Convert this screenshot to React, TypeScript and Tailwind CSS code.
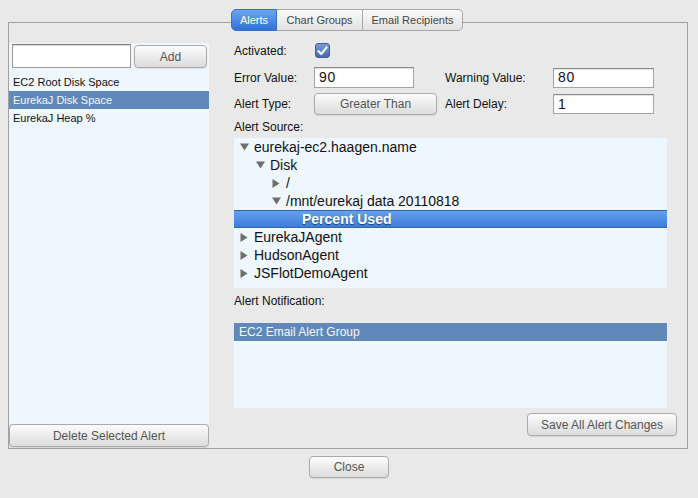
import React from "react";

const alerts = [
  { id: 1, name: "EC2 Root Disk Space", selected: false },
  { id: 2, name: "EurekaJ Disk Space", selected: true },
  { id: 3, name: "EurekaJ Heap %", selected: false },
];

const tree = [
  { label: "eurekaj-ec2.haagen.name", level: 0, arrow: "down" },
  { label: "Disk", level: 1, arrow: "down" },
  { label: "/", level: 2, arrow: "right" },
  { label: "/mnt/eurekaj data 20110818", level: 2, arrow: "down" },
  { label: "Percent Used", level: 3, arrow: "", selected: true },
  { label: "EurekaJAgent", level: 0, arrow: "right" },
  { label: "HudsonAgent", level: 0, arrow: "right" },
  { label: "JSFlotDemoAgent", level: 0, arrow: "right" },
];

const Btn = ({
  children,
  className = "",
}: {
  children: React.ReactNode;
  className?: string;
}) => (
  <button
    className={`flex items-center justify-center rounded-[4px] border border-[#aaaaaa] bg-linear-to-b from-[#fcfcfc] to-[#dcdcdc] text-[12px] text-[#555555] shadow-[0_1px_1px_rgba(0,0,0,0.08)] ${className}`}
  >
    {children}
  </button>
);

const Field = ({ value, className = "" }: { value: string; className?: string }) => (
  <div
    className={`flex items-center border border-[#a4a4a4] border-t-[#8a8a8a] bg-white pl-[4px] text-[14px] tracking-[0.6px] text-[#111] shadow-[inset_0_1px_1px_rgba(0,0,0,0.12)] ${className}`}
  >
    {value}
  </div>
);

const Arrow = ({ dir }: { dir: string }) => (
  <span className="flex w-[14px] items-center">
    {dir === "down" && (
      <svg width="9" height="8" viewBox="0 0 9 8">
        <path d="M0 0.5 H9 L4.5 7.5 Z" fill="#6e6e6e" />
      </svg>
    )}
    {dir === "right" && (
      <svg width="8" height="9" viewBox="0 0 8 9">
        <path d="M0.5 0 V9 L7.5 4.5 Z" fill="#6e6e6e" />
      </svg>
    )}
  </span>
);

const App = () => {
  return (
    <div className="h-[498px] w-[698px] overflow-hidden bg-[#e9e9e9] pt-[9px] font-[family-name:'Liberation_Sans',Arial,sans-serif] text-[#111]">
      {/* Tabs */}
      <div className="relative z-10 flex h-[22px] justify-center pr-[4px] text-[11px]">
        <div className="flex w-[46px] items-center justify-center rounded-l-[5px] border border-[#3a6fc2] bg-linear-to-b from-[#6aa6ee] to-[#2f72d6] text-white">
          Alerts
        </div>
        <div className="flex w-[86px] items-center justify-center border-y border-r border-[#a6a6a6] bg-linear-to-b from-[#fafafa] to-[#e2e2e2] text-[#444]">
          Chart Groups
        </div>
        <div className="flex w-[100px] items-center justify-center rounded-r-[5px] border-y border-r border-[#a6a6a6] bg-linear-to-b from-[#fafafa] to-[#e2e2e2] text-[#444]">
          Email Recipients
        </div>
      </div>

      {/* Frame */}
      <div className="-mt-[9px] ml-[8px] flex h-[427px] w-[680px] gap-[25px] border border-[#a2a2a2] pt-[20px] pb-[1px]">
        {/* Left column */}
        <div className="flex w-[200px] flex-col">
          <div className="flex flex-1 flex-col bg-[#eef6fe]">
            <div className="flex h-[30px] items-start gap-[3px] pl-[3px] pt-[1px]">
              <div className="h-[24px] w-[119px] border border-[#9c9c9c] border-t-[#7d7d7d] bg-white shadow-[inset_0_1px_1px_rgba(0,0,0,0.15)]" />
              <Btn className="mt-[1px] h-[23px] w-[73px]">Add</Btn>
            </div>
            {alerts.map((a) => (
              <div
                key={a.id}
                className={`flex h-[18px] items-center pl-[4px] text-[11px] ${
                  a.selected ? "bg-[#6089ba] text-[#f4f6fa]" : "text-[#111]"
                }`}
              >
                {a.name}
              </div>
            ))}
          </div>
          <Btn className="h-[23px] w-[200px]">Delete Selected Alert</Btn>
        </div>

        {/* Right column */}
        <div className="flex w-[443px] flex-col text-[12px]">
          <div className="flex h-[15px] items-center">
            <span className="w-[81px]">Activated:</span>
            <span className="flex h-[15px] w-[15px] items-center justify-center rounded-[3px] border border-[#3d5f9e] bg-linear-to-b from-[#7b9bd6] to-[#4668b0]">
              <svg width="11" height="10" viewBox="0 0 11 10">
                <path
                  d="M1.5 5.2 L4.3 8 L9.6 1.4"
                  fill="none"
                  stroke="white"
                  strokeWidth="2.2"
                  strokeLinecap="round"
                  strokeLinejoin="round"
                />
              </svg>
            </span>
          </div>

          <div className="mt-[9px] flex h-[21px] items-center">
            <span className="w-[80px]">Error Value:</span>
            <Field value="90" className="h-[21px] w-[100px]" />
            <span className="ml-[31px] w-[108px]">Warning Value:</span>
            <Field value="80" className="h-[20px] w-[101px]" />
          </div>

          <div className="mt-[5px] flex h-[22px] items-center">
            <span className="w-[80px]">Alert Type:</span>
            <Btn className="h-[22px] w-[123px]">Greater Than</Btn>
            <span className="ml-[8px] w-[108px]">Alert Delay:</span>
            <Field value="1" className="h-[20px] w-[101px]" />
          </div>

          <div className="mt-[5px] flex h-[14px] items-center">Alert Source:</div>

          <div className="mt-[4px] h-[150px] w-[433px] bg-[#eef6fe] text-[14px]">
            {tree.map((n) =>
              n.selected ? (
                <div
                  key={n.label}
                  className="flex h-[18px] items-center border-y border-[#3566b4] bg-linear-to-b from-[#64a0ec] to-[#3c7ddb] font-bold text-white [text-shadow:0_1px_1px_rgba(0,0,0,0.55)]"
                  style={{ paddingLeft: 6 + n.level * 16 + 14 }}
                >
                  {n.label}
                </div>
              ) : (
                <div
                  key={n.label}
                  className="flex h-[18px] items-center"
                  style={{ paddingLeft: 6 + n.level * 16 }}
                >
                  <Arrow dir={n.arrow} />
                  {n.label}
                </div>
              )
            )}
          </div>

          <div className="mt-[6px] flex h-[14px] items-center">Alert Notification:</div>

          <div className="mt-[15px] h-[85px] w-[433px] bg-[#eef6fe]">
            <div className="flex h-[18px] items-center bg-[#6089ba] pl-[5px] text-[#f4f6fa]">
              EC2 Email Alert Group
            </div>
          </div>

          <Btn className="mt-[5px] h-[23px] w-[150px] self-end">Save All Alert Changes</Btn>
        </div>
      </div>

      <div className="mt-[7px] flex justify-center">
        <Btn className="h-[22px] w-[80px]">Close</Btn>
      </div>
    </div>
  );
};

export default App;
